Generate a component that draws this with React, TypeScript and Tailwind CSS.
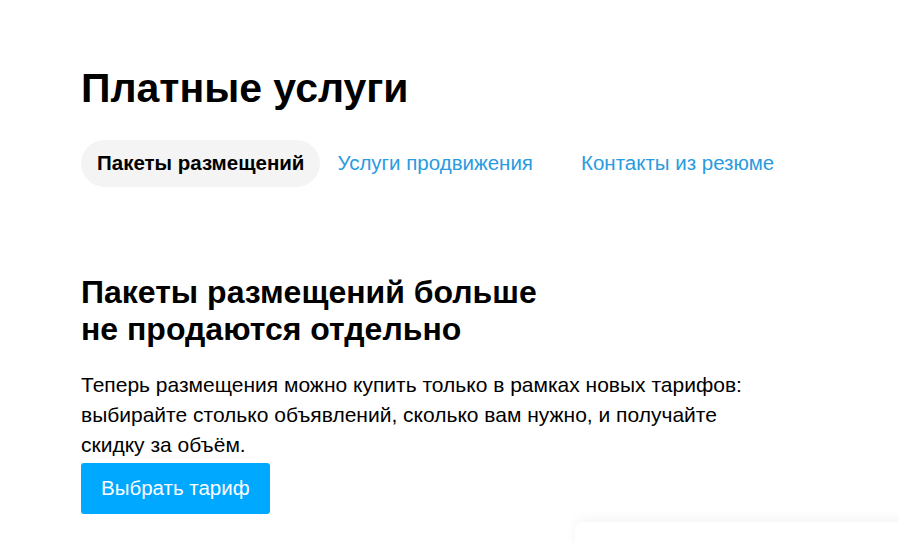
const tabs = [
    { label: "Пакеты размещений", active: true },
    { label: "Услуги продвижения", active: false },
    { label: "Контакты из резюме", active: false },
];

const App = () => {
    return (
        <div className="min-h-screen w-full bg-white text-black font-['Liberation_Sans',Arial,sans-serif] overflow-hidden relative">
            <div className="pl-[81px] pt-[62px]">
                <h1 className="text-[41px] leading-[52px] font-bold">Платные услуги</h1>

                <div className="flex items-center mt-[26px]">
                    {tabs.map((tab, i) => (
                        <button
                            key={tab.label}
                            className={
                                tab.active
                                    ? "h-[47px] px-4 rounded-full bg-[#f4f4f5] text-[20.5px] font-bold"
                                    : i === 1
                                        ? "h-[47px] pl-[17px] text-[20.5px] text-[#2a9be0]"
                                        : "h-[47px] pl-[48px] text-[20.5px] text-[#2a9be0]"
                            }
                        >
                            {tab.label}
                        </button>
                    ))}
                </div>

                <div className="mt-[87px] w-[720px]">
                    <h2 className="text-[32px] leading-[37px] font-bold">
                        Пакеты размещений больше
                        <br />
                        не продаются отдельно
                    </h2>
                    <p className="mt-[22px] text-[21px] leading-[30px] w-[680px]">
                        Теперь размещения можно купить только в рамках новых тарифов: выбирайте столько объявлений, сколько вам нужно, и получайте скидку за объём.
                    </p>
                    <button className="mt-[3px] h-[51px] px-5 rounded-[3px] bg-[#00a8ff] text-white text-[20.5px]">
                        Выбрать тариф
                    </button>
                </div>
            </div>
            <div className="absolute left-[575px] top-[522px] w-[340px] h-[60px] rounded-lg bg-white shadow-[0_-4px_12px_rgba(0,0,0,0.04)]" />
        </div>
    );
};

export default App;
